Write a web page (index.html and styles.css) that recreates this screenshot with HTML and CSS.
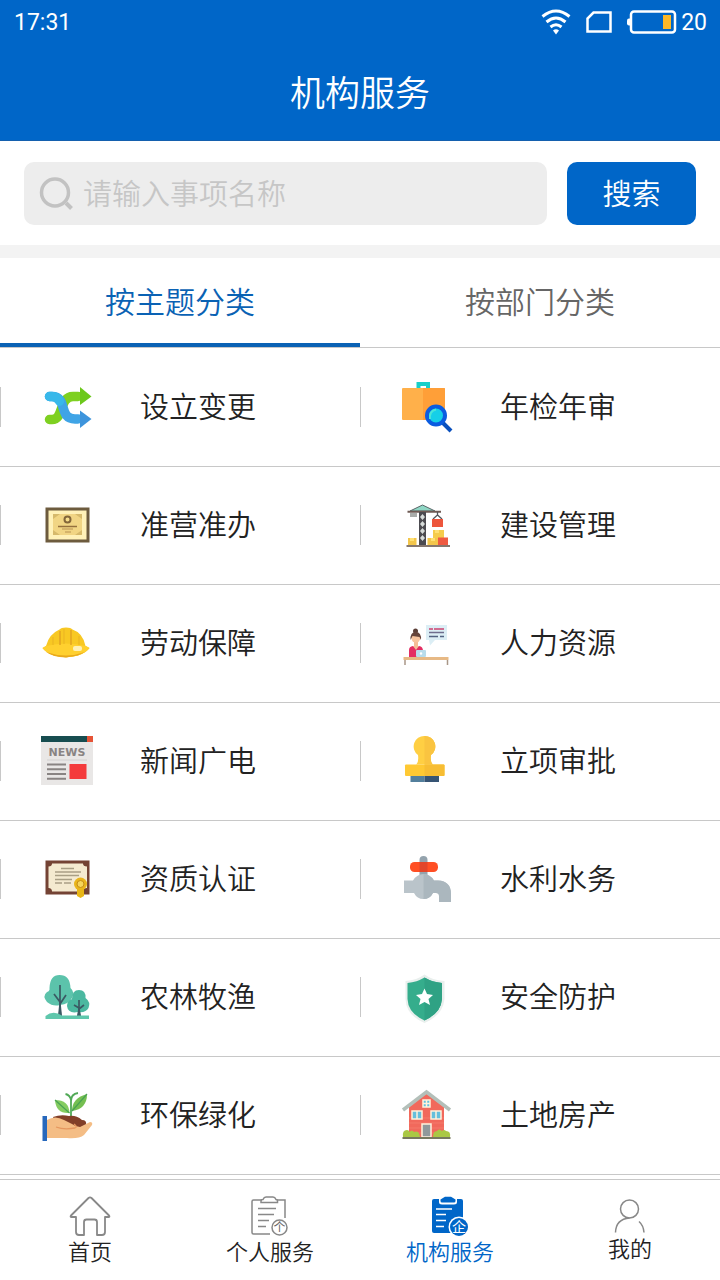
FILE: index.html
```
<!DOCTYPE html>
<html lang="zh-CN">
<head>
    <meta charset="UTF-8">
    <meta name="viewport" content="width=device-width, initial-scale=1.0">
    <title>机构服务</title>
    <link rel="stylesheet" href="styles.css">
</head>
<body>
    <header class="header">
        <div class="status-bar">
            <span>17:31</span>
            <div class="status-icons">
                <svg width="30" height="26" viewBox="0 0 30 26" fill="none" stroke="#fff" stroke-width="3">
                    <path d="M1.5 7.5Q15-3.5 28.5 7.5M5.5 13Q15 5 24.5 13M9.5 18Q15 13.5 20.5 18"/>
                    <path d="M12 21.5Q15 19 18 21.5L15 25.5Z" fill="#fff" stroke="none"/>
                </svg>
                <svg width="26" height="22" viewBox="0 0 26 22" fill="none" stroke="#fff" stroke-width="2.5">
                    <path d="M7.5 1.5H24.5V20.5H1.5V7.5Z"/>
                </svg>
                <div class="battery">
                    <svg width="50" height="24" viewBox="0 0 50 24">
                        <rect x="4" y="1.5" width="44" height="21" rx="3" fill="none" stroke="#fff" stroke-width="2.5"/>
                        <path d="M3 8.5H2Q0 8.5 0 10.5V13.5Q0 15.5 2 15.5H3Z" fill="#fff"/>
                        <rect x="36" y="5" width="8" height="14" fill="#fdb827"/>
                    </svg>
                    <span>20</span>
                </div>
            </div>
        </div>
        <h1>机构服务</h1>
    </header>

    <form class="search">
        <label class="search-box">
            <svg width="34" height="34" viewBox="0 0 34 34" fill="none" stroke="#c2c2c2" stroke-width="3.5">
                <circle cx="16" cy="15.5" r="13.5"/>
                <path d="M27 26L32.500 31.5" stroke-width="4"/>
            </svg>
            <input type="text" placeholder="请输入事项名称" aria-label="请输入事项名称">
        </label>
        <button type="submit" class="search-btn">搜索</button>
    </form>

    <div class="tabs">
        <button type="button" class="tab active">按主题分类</button>
        <button type="button" class="tab">按部门分类</button>
    </div>

    <main class="grid">
        <a href="#" class="item">
            <svg class="icon" viewBox="0 0 52 52">
                <g fill="none" stroke-width="9.5" stroke-linecap="round">
                    <path d="M8.500 38.5H11C23 38.5 18 15.5 32 15.5H37" stroke="#7ed021"/>
                    <path d="M8.500 15.5H11C27 15.5 17 38 34 38H37" stroke="#3fa4e6"/>
                    <path d="M8.500 15.5H11Q16 15.5 18.5 20" stroke="#38b8ea"/>
                </g>
                <path d="M39 6L50.5 15.5L39 24Z" fill="#6cc81c"/>
                <path d="M39 29.5L50.5 38L39 47Z" fill="#3d94dc"/>
            </svg>
            <span>设立变更</span>
        </a>
        <a href="#" class="item">
            <svg class="icon" viewBox="0 0 52 52">
                <path d="M15.5 8V1H29V8H25V5H19.5V8Z" fill="#18cfc8"/>
                <rect x="1" y="7" width="43" height="32" rx="1" fill="#ffb04a"/>
                <path d="M22 7H43Q44 7 44 8V38Q44 39 43 39H22Z" fill="#ff9f38"/>
                <path d="M42 42L50 50" stroke="#0a50bd" stroke-width="4"/>
                <circle cx="35" cy="34.5" r="9" fill="#16cfe8" stroke="#0b5ce0" stroke-width="4"/>
                <path d="M29 38Q28 30 35 28.5" fill="none" stroke="#4be5d8" stroke-width="2"/>
            </svg>
            <span>年检年审</span>
        </a>
        <a href="#" class="item">
            <svg class="icon" viewBox="0 0 52 52">
                <rect x="4.5" y="8.5" width="44" height="35" fill="#6d5b3e"/>
                <rect x="7.5" y="11.5" width="38" height="29" fill="#fff1b8"/>
                <rect x="12" y="15" width="29" height="21" fill="#f1d584"/>
                <path d="M12 15H19L12 20ZM41 15H34L41 20ZM12 36V31L19 36ZM41 36V31L34 36Z" fill="#d6b96b"/>
                <circle cx="26.5" cy="20.5" r="3" fill="#f6dc8b" stroke="#82663a" stroke-width="2"/>
                <path d="M17 27.5H36" stroke="#94703d" stroke-width="1.5"/>
                <path d="M21 30H32M24 33H30" stroke="#b99252"/>
            </svg>
            <span>准营准办</span>
        </a>
        <a href="#" class="item">
            <svg class="icon" viewBox="0 0 52 52">
                <path d="M21.5 6L34 12H9Z" fill="#8fd7c5" stroke="#5b6668"/>
                <rect x="9" y="14" width="7" height="4" fill="#a9acaa"/>
                <path d="M6.5 12.8H40" stroke="#6f5b55" stroke-width="2"/>
                <rect x="18" y="13" width="7" height="34" fill="#4c4b50"/>
                <path d="M21.5 15L24 18L21.5 21L19 18ZM21.5 22L24 25L21.5 28L19 25ZM21.5 29L24 32L21.5 35L19 32ZM21.5 36L24 39L21.5 42L19 39Z" fill="#d7dcda"/>
                <path d="M36.5 13V16L32 20M36.5 16L41 20" fill="none" stroke="#52565b" stroke-width="1.3"/>
                <rect x="31" y="20" width="11" height="8" fill="#ed563c"/>
                <rect x="32" y="31" width="11" height="8" fill="#f5cc4b"/>
                <rect x="26.5" y="39" width="10.5" height="7" fill="#f3c64b"/>
                <rect x="7" y="39" width="8.5" height="7" fill="#f3c64b"/>
                <rect x="37" y="38.5" width="10" height="7.5" fill="#ef5a41"/>
                <path d="M34 31V34H38V31ZM30 39V42H34V39ZM9 39V42H13V39Z" fill="#ffe073"/>
                <path d="M5.5 47H49" stroke="#85776e" stroke-width="2"/>
            </svg>
            <span>建设管理</span>
        </a>
        <a href="#" class="item">
            <svg class="icon" viewBox="0 0 52 52">
                <path d="M1.5 31L5 29Q8 17 18.5 12.5Q20 10.5 25 10.5Q30 10.5 31.5 12.5Q42 16 44.5 29L48.5 31Q45 36 37 38.5Q25 42 13 38.5Q5 36 1.5 31Z" fill="#f8c823"/>
                <path d="M5 29Q25 24 45 29L48.5 31Q45 36 37 38.5Q25 42 13 38.5Q5 36 1.5 31Z" fill="#ffd02f"/>
                <path d="M5 35Q25 42 44 35Q38 39 25 40.5Q12 40 5 35Z" fill="#e9a91c"/>
                <path d="M19 14V28M30 13V28" fill="none" stroke="#df9e20" stroke-width="1.3"/>
                <path d="M23 12V27M12 20V28M38 19V28" fill="none" stroke="#eab323"/>
                <rect x="32" y="29" width="9" height="5" rx="2" fill="#fff0b5"/>
            </svg>
            <span>劳动保障</span>
        </a>
        <a href="#" class="item">
            <svg class="icon" viewBox="0 0 52 52">
                <rect x="25" y="8" width="21" height="15" fill="#dceef5"/>
                <path d="M28 23H34L29 28.5Z" fill="#dceef5"/>
                <path d="M28 12H32M33 12H43" stroke="#cc426f" stroke-width="1.5"/>
                <path d="M28 15.5H43" stroke="#6f6d8d" stroke-width="1.5"/>
                <path d="M28 19.5H37M39 19.5H43" stroke="#536382" stroke-width="1.5"/>
                <circle cx="14.5" cy="14" r="2.5" fill="#5a3e36"/>
                <path d="M13 24H17V29L21 31V36H9V31L13 29Z" fill="#f5bd96"/>
                <circle cx="14.8" cy="21" r="4.5" fill="#f7c49e"/>
                <path d="M9.5 23Q9 15 14.8 15Q20.5 15 20 23L18.5 20L11.5 19Z" fill="#65443a"/>
                <path d="M8 40V33Q8 29.5 12 29L15 33L18 29Q22 29.5 22 34V40Z" fill="#e32e63"/>
                <rect x="15" y="33" width="10" height="7" rx="1" fill="#b8dceb"/>
                <circle cx="20" cy="36.5" r="1.2" fill="#fff"/>
                <path d="M2.5 41.5H47.5" stroke="#e7b985" stroke-width="3"/>
                <path d="M4 43V48M46.5 43V48" stroke="#a99788" stroke-width="1.5"/>
            </svg>
            <span>人力资源</span>
        </a>
        <a href="#" class="item">
            <svg class="icon" viewBox="0 0 52 52">
                <rect y="1" width="52" height="49" fill="#e9e7e6"/>
                <rect y="1" width="46" height="6" fill="#174d50"/>
                <rect x="46" y="1" width="6" height="6" fill="#e65336"/>
                <text x="26" y="21" text-anchor="middle" class="news-text">NEWS</text>
                <path d="M6 25H46" stroke="#d2d0cf"/>
                <path d="M6 29.5H25M6 34.2H25M6 39H25M6 43.7H25" stroke="#898483" stroke-width="2"/>
                <rect x="28.5" y="29" width="17" height="15" fill="#f43b3c"/>
            </svg>
            <span>新闻广电</span>
        </a>
        <a href="#" class="item">
            <svg class="icon" viewBox="0 0 52 52">
                <path d="M23.5 1A10.5 10.5 0 0 1 30 20Q29 27 32 29.5H15Q18 27 17 20A10.5 10.5 0 0 1 23.5 1Z" fill="#ffcf43"/>
                <path d="M23.5 1A10.5 10.5 0 0 1 30 20Q29 27 32 29.5H23.5Z" fill="#fac440"/>
                <rect x="4" y="29.5" width="39.5" height="11.5" rx="1" fill="#ffc933"/>
                <path d="M23.5 29.5H42.5Q43.5 29.5 43.5 30.5V40Q43.5 41 42.5 41H23.5Z" fill="#f7bd33"/>
                <rect x="9.5" y="41" width="14" height="6" fill="#537f9c"/>
                <rect x="23.5" y="41" width="14.5" height="6" fill="#365474"/>
            </svg>
            <span>立项审批</span>
        </a>
        <a href="#" class="item">
            <svg class="icon" viewBox="0 0 52 52">
                <rect x="4.5" y="7.5" width="44" height="34" fill="#744334"/>
                <path d="M11 10.5H42Q42 13.5 46 13.5V35Q42 35 42 38.5H11Q11 35 7.5 35V13.5Q11 13.5 11 10.5Z" fill="#f4ead0"/>
                <path d="M20 15.5H33M14 19H40M14 22.5H38M14 26.5H31M14 30H21M23 30H30" stroke="#a99f85" stroke-width="1.3"/>
                <path d="M36 35V43L39.5 45L43 43V35Z" fill="#e9b717"/>
                <circle cx="39.5" cy="31" r="6.5" fill="#e9b51c"/>
                <circle cx="39.5" cy="31" r="3.5" fill="#f5d45b" stroke="#c48d15"/>
            </svg>
            <span>资质认证</span>
        </a>
        <a href="#" class="item">
            <svg class="icon" viewBox="0 0 52 52">
                <path d="M18.5 28V7Q18.5 3 22.5 3Q26.5 3 26.5 7V28Z" fill="#94a3ad"/>
                <rect x="9" y="9" width="28" height="10" rx="4.5" fill="#ff4f24"/>
                <path d="M18.5 9H26.5V19H18.5Z" fill="#e2452a"/>
                <path d="M3 27.500H12Q16 21 22.5 21Q29 21 33 27.5H37Q50 28 50 41V49H38V43Q38 40 35 40H32Q29 46 22.5 46Q16 46 13 40H3Z" fill="#bac4ca"/>
                <path d="M22.5 21Q29 21 33 27.5H37Q50 28 50 41V49H38V43Q38 40 35 40H32Q29 46 22.5 46Z" fill="#abb7be"/>
            </svg>
            <span>水利水务</span>
        </a>
        <a href="#" class="item">
            <svg class="icon" viewBox="0 0 52 52">
                <path d="M18.5 4Q29 4 29.5 17Q34 21 31 27Q28 33 19 34Q12 36 6 31Q1 25 6 21Q9 20 8.5 17Q9 4 18.5 4Z" fill="#5cc3ab"/>
                <path d="M38 19Q45 19 44.5 27Q50 31 47.5 37Q45 42 37 41Q27 43 26 35Q26 30 31 28Q31 19 38 19Z" fill="#4bb8a0"/>
                <path d="M19 45V14M19 31L13 23M19 33L25 24M38 45V29M38 37L33 34M38 38L43 34" fill="none" stroke="#3b5963" stroke-width="1.7"/>
                <path d="M17.5 45L19 30L20.5 45ZM36.5 45L38 36L39.5 45Z" fill="#3b5963" stroke="#3b5963"/>
                <path d="M4.5 48V45Q12 39 21 44.5H48V48Z" fill="#5fc7ac"/>
            </svg>
            <span>农林牧渔</span>
        </a>
        <a href="#" class="item">
            <svg class="icon" viewBox="0 0 52 52">
                <path d="M23.5 3.5Q31 9 43.5 10V28Q42 44 23.5 52Q5 44 4.5 28V10Q16 9 23.5 3.5Z" fill="#e9efed"/>
                <path d="M23.5 6.5Q31 11 41 12V28Q40 42 23.5 49.5Q7 42 6.5 28V12Q16 11 23.5 6.5Z" fill="#35ad8c"/>
                <path d="M23.5 6.5Q31 11 41 12V28Q40 42 23.5 49.5Z" fill="#2fa284"/>
                <path d="M23.5 17.5L26 23L32 24L27.5 28L29 34L23.5 31L18 34L19.5 28L15 24L21 23Z" fill="#fff"/>
            </svg>
            <span>安全防护</span>
        </a>
        <a href="#" class="item">
            <svg class="icon" viewBox="0 0 52 52">
                <path d="M30 28V11Q29 6 24.5 5M30 12Q30 5 37 4" fill="none" stroke="#51a957" stroke-width="1.8"/>
                <path d="M28.5 24Q15 25 14 11Q28 11 28.5 24Z" fill="#85cc61"/>
                <path d="M31 22Q31 9 46 5Q46 20 31 22Z" fill="#75bf51"/>
                <path d="M14 11L28.5 24M46 5L31 22" stroke="#48a353" stroke-width="1.2"/>
                <path d="M12 28Q20 25 28 27Q35 26 41 31Q46 31 45 36L35 41L16 38Z" fill="#823f28"/>
                <path d="M6 31Q14 26 23 31L31 35Q35 38 39 38L49 33Q52 33 51 36L43 46Q38 50 26 49H6Z" fill="#f4bd85"/>
                <path d="M15 38Q23 41 34 39Q37 38 33 35" fill="none" stroke="#e5975f" stroke-width="1.3"/>
                <rect x="1.5" y="27" width="4.5" height="25" fill="#2768bc"/>
            </svg>
            <span>环保绿化</span>
        </a>
        <a href="#" class="item">
            <svg class="icon" viewBox="0 0 52 52">
                <path d="M8 48V18L25.5 4L43 18V48Z" fill="#f1695c"/>
                <path d="M8 29H43M8 34H43M8 39H43M8 44H43" stroke="#f47a6a"/>
                <path d="M2 21L25.5 3L49 21" fill="none" stroke="#b3bfb9" stroke-width="3.5"/>
                <g fill="#66bfdc" stroke="#fff2dc" stroke-width="1.5">
                    <rect x="22" y="11" width="7" height="7"/>
                    <path d="M25.5 11V18M22 14.5H29"/>
                    <rect x="11" y="22" width="10" height="8"/>
                    <path d="M16 22V30"/>
                    <rect x="30" y="22" width="10" height="8"/>
                    <path d="M35 22V30"/>
                    <rect x="21" y="35" width="9" height="13" fill="#90999b"/>
                </g>
                <path d="M2 48Q1 41 6 41Q8 41 8.5 43Q11 40 13 43Q18 41 19 48ZM32 48Q32 42 36 42Q38 39 41 42Q43 40 45 42Q50 42 49 48Z" fill="#aac844"/>
                <path d="M1.5 49H49.5" stroke="#77795f" stroke-width="2"/>
            </svg>
            <span>土地房产</span>
        </a>
    </main>

    <nav class="nav">
        <a href="#" class="nav-item">
            <svg class="nav-icon" viewBox="0 0 42 40" fill="none" stroke="#888" stroke-width="1.8" stroke-linejoin="round">
                <path d="M7 21H2.5Q1 21 2 19.5L19.5 2Q21 .8 22.5 2L40 19.5Q41 21 39.5 21H36V36Q36 39 33 39H28V26Q28 23.5 25.5 23.5H17.5Q15 23.5 15 26V39H10Q7 39 7 36Z"/>
            </svg>
            <span>首页</span>
        </a>
        <a href="#" class="nav-item">
            <svg class="nav-icon" viewBox="0 0 42 40" fill="none" stroke="#888" stroke-width="1.5">
                <path d="M13 4H4.5Q3 4 3 5.5V36.5Q3 38 4.5 38H21M28 4H36V22"/>
                <path d="M12 6.5V4.5Q12 3.5 14 3.5Q15 1 17 1H24Q26 1 27 3.5Q28.5 3.5 28.5 5V6.5Z"/>
                <path d="M9 12.5H27M9 18.5H25M9 24.5H20M9 30.5H17"/>
                <circle cx="30.5" cy="31.5" r="7.5"/>
                <text x="30.5" y="36" text-anchor="middle" class="badge-text">个</text>
            </svg>
            <span>个人服务</span>
        </a>
        <a href="#" class="nav-item active">
            <svg class="nav-icon" viewBox="0 0 42 40">
                <rect x="3" y="3" width="31" height="34" rx="2" fill="#0066c8"/>
                <path d="M10 2H28V6Q28 8.5 25 8.5H13Q10 8.5 10 6Z" fill="#fff"/>
                <path d="M11.5 3.5L16 .8H22L26.5 3.5V5Q26.5 6.5 25 6.5H13Q11.5 6.5 11.5 5Z" fill="#0066c8"/>
                <path d="M7 13H23M7 18.5H17M7 24.5H17M7 30.5H15" stroke="#fff" stroke-width="1.5"/>
                <circle cx="30" cy="31" r="10.5" fill="#fff"/>
                <circle cx="30" cy="31" r="9" fill="#0066c8"/>
                <text x="30" y="36" text-anchor="middle" class="badge-text badge-text-active">企</text>
            </svg>
            <span>机构服务</span>
        </a>
        <a href="#" class="nav-item">
            <svg class="nav-icon nav-icon-short" viewBox="0 0 42 37" fill="none" stroke="#888" stroke-width="1.5">
                <circle cx="20.5" cy="13" r="9"/>
                <path d="M6.5 36.5Q7 23 20.5 22M30 25.5Q34.5 29.5 35 36.5"/>
            </svg>
            <span>我的</span>
        </a>
    </nav>
</body>
</html>
```
FILE: styles.css
```
:root {
    --primary-color: #0066c8;
    --text-color: #222;
    --line-color: #c8c8c8;
}

* {
    box-sizing: border-box;
}

body {
    display: flex;
    flex-direction: column;
    min-height: 100vh;
    margin: 0;
    background-color: #fff;
    color: var(--text-color);
    font-family: 'Noto Sans CJK SC', sans-serif;
    font-weight: 350;
}

a {
    color: inherit;
    text-decoration: none;
}

button,
input {
    font: inherit;
    border: none;
    padding: 0;
}

button {
    cursor: pointer;
}

/* Header */
.header {
    background-color: var(--primary-color);
    color: #fff;
    border-bottom: 1px solid #1460ae;
}

.status-bar {
    display: flex;
    justify-content: space-between;
    align-items: center;
    height: 44px;
    padding: 0 13px 0 14px;
    font-family: Roboto, sans-serif;
    font-size: 23px;
    font-weight: 400;
}

.status-icons {
    display: flex;
    align-items: center;
    gap: 15px;
}

.battery {
    display: flex;
    align-items: center;
    gap: 4px;
}

.header h1 {
    margin: 0;
    padding-bottom: 2px;
    font-size: 35px;
    font-weight: inherit;
    line-height: 94px;
    text-align: center;
}

/* Search */
.search {
    display: flex;
    gap: 20px;
    padding: 21px 24px 20px;
    border-bottom: 13px solid #f3f3f3;
    font-size: 29px;
}

.search-box {
    display: flex;
    flex: 1;
    align-items: center;
    gap: 10px;
    height: 63px;
    padding: 0 15px;
    border-radius: 10px;
    background-color: #ededed;
}

.search-box input {
    flex: 1;
    min-width: 0;
    height: 60px;
    padding-bottom: 4px;
    background: none;
    outline: none;
}

.search-box input::placeholder {
    color: #c6c6c6;
}

.search-btn {
    width: 129px;
    padding-bottom: 4px;
    border-radius: 10px;
    background-color: var(--primary-color);
    color: #fff;
}

/* Tabs */
.tabs {
    display: flex;
    margin-bottom: 1px;
    border-bottom: 1px solid var(--line-color);
}

.tab {
    flex: 1;
    height: 89px;
    padding-bottom: 2px;
    border-bottom: 4px solid transparent;
    background: none;
    color: #666;
    font-size: 30px;
}

.tab.active {
    border-bottom-color: #0a62b4;
    color: #0a62b4;
}

/* Category list */
.grid {
    display: grid;
    grid-template-columns: 1fr 1fr;
}

.item {
    display: flex;
    align-items: center;
    height: 118px;
    padding-bottom: 2px;
    border-bottom: 1px solid var(--line-color);
    font-size: 29px;
}

.item::before {
    content: '';
    width: 1px;
    height: 40px;
    background-color: var(--line-color);
}

.item span {
    padding-bottom: 4px;
}

.icon {
    width: 52px;
    height: 52px;
    margin: 0 47px 0 40px;
}

.news-text {
    fill: #898483;
    font: bold 11px 'DejaVu Sans', sans-serif;
}

/* Bottom navigation */
.nav {
    display: flex;
    height: 101px;
    margin-top: auto;
    border-top: 1px solid var(--line-color);
}

.nav-item {
    display: flex;
    flex: 1;
    flex-direction: column;
    align-items: center;
    padding-top: 16px;
    font-size: 22px;
    line-height: 28px;
}

.nav-item.active {
    color: var(--primary-color);
}

.nav-icon {
    width: 42px;
    height: 40px;
}

.nav-icon-short {
    height: 37px;
}

.badge-text {
    fill: #666;
    stroke: none;
    font-size: 12px;
    font-weight: 400;
}

.badge-text-active {
    fill: #fff;
    font-size: 14px;
}
```
